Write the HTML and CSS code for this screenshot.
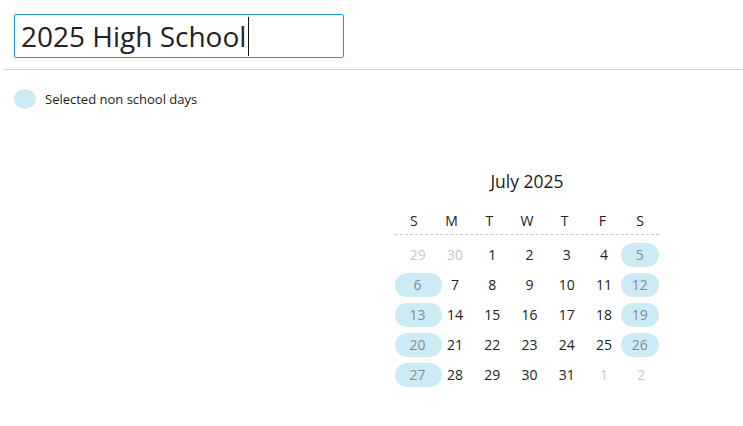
FILE: index.html
```html
<!DOCTYPE html>
<html>
<head>
<meta charset="utf-8">
<link rel="stylesheet" href="styles.css">
</head>
<body>
<div class="page">
  <div class="name-input"><span class="name-text">2025 High School</span><span class="caret"></span></div>
  <div class="rule"></div>
  <div class="legend"><span class="swatch"></span><span class="legend-text">Selected non school days</span></div>
  <div class="calendar">
    <div class="cal-title">July 2025</div>
    <div class="cal-head">
      <span>S</span><span>M</span><span>T</span><span>W</span><span>T</span><span>F</span><span>S</span>
    </div>
    <div class="cal-body">
      <span class="day muted">29</span><span class="day muted">30</span><span class="day">1</span><span class="day">2</span><span class="day">3</span><span class="day">4</span><span class="day sat"><span class="pill">5</span></span>
      <span class="day sun"><span class="pill">6</span></span><span class="day">7</span><span class="day">8</span><span class="day">9</span><span class="day">10</span><span class="day">11</span><span class="day sat"><span class="pill">12</span></span>
      <span class="day sun"><span class="pill">13</span></span><span class="day">14</span><span class="day">15</span><span class="day">16</span><span class="day">17</span><span class="day">18</span><span class="day sat"><span class="pill">19</span></span>
      <span class="day sun"><span class="pill">20</span></span><span class="day">21</span><span class="day">22</span><span class="day">23</span><span class="day">24</span><span class="day">25</span><span class="day sat"><span class="pill">26</span></span>
      <span class="day sun"><span class="pill">27</span></span><span class="day">28</span><span class="day">29</span><span class="day">30</span><span class="day">31</span><span class="day muted">1</span><span class="day muted">2</span>
    </div>
  </div>
</div>
</body>
</html>
```
FILE: styles.css
```css
html, body {
  margin: 0;
  padding: 0;
  background: #fff;
}
body {
  font-family: "Open Sans", "Noto Sans", sans-serif;
  color: #222;
}
.page {
  padding-top: 14px;
}
.name-input {
  margin-left: 14px;
  width: 330px;
  height: 44px;
  box-sizing: border-box;
  border: 1px solid #1e9ac4;
  border-radius: 2px;
  display: flex;
  align-items: center;
  padding-left: 6px;
  font-size: 28px;
  color: #222;
}
.name-text {
  line-height: 40px;
}
.caret {
  width: 1px;
  height: 39px;
  background: #111;
  margin-left: 2px;
}
.rule {
  margin: 11px 0 0 4px;
  border-top: 1px solid #cccccc;
}
.legend {
  margin: 19px 0 0 14px;
  display: flex;
  align-items: center;
  gap: 9px;
}
.swatch {
  width: 22px;
  height: 20px;
  border-radius: 50%;
  background: #cdebf5;
}
.legend-text {
  font-size: 13px;
  line-height: 20px;
}
.calendar {
  margin: 60px 0 0 395px;
  width: 264px;
}
.cal-title {
  text-align: center;
  font-size: 17.5px;
  line-height: 24px;
}
.cal-head {
  margin-top: 13px;
  height: 28px;
  display: grid;
  grid-template-columns: repeat(7, minmax(0, 1fr));
  align-items: center;
  text-align: center;
  font-size: 14px;
  border-bottom: 1px dashed #c8c8c8;
}
.cal-body {
  padding-top: 8px;
  margin: 0 -1px 0 4px;
  display: grid;
  grid-template-columns: repeat(7, minmax(0, 1fr));
  grid-auto-rows: 24px;
  row-gap: 6px;
  font-size: 14px;
}
.day {
  display: flex;
  justify-content: center;
  align-items: center;
  line-height: 24px;
  color: #222;
  min-width: 0;
}
.day.muted {
  color: #c8c8c8;
}
.pill {
  display: block;
  flex: none;
  height: 24px;
  box-sizing: border-box;
  border-radius: 12px;
  background: #cdebf5;
  color: #8a8a8a;
  text-align: center;
}
.day.sat,
.day.sun {
  justify-content: flex-start;
}
.day.sat .pill {
  width: 38px;
  margin-left: -2px;
}
.day.sun .pill {
  width: 47px;
  margin-left: -4px;
  padding-right: 2px;
}
```
